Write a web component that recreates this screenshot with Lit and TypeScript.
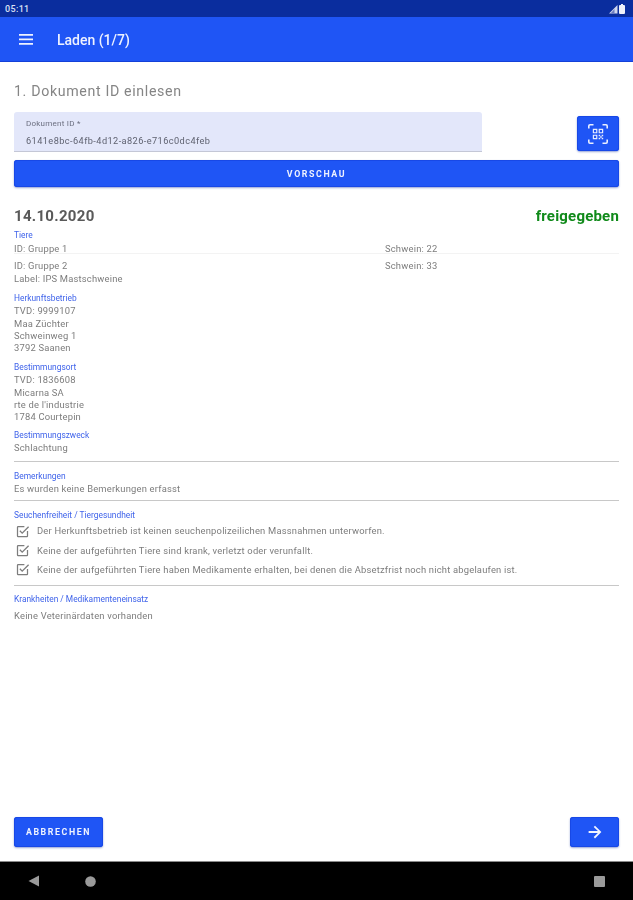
import { LitElement, html, css, svg } from "lit";
import { customElement } from "lit/decorators.js";

const check = svg`<path d="M7 11.500l1.500-1.500 3 3L21 3.500 22.500 5l-11 11z" fill="#7d7d7d"/><path d="M19 19H5V5h10V3H5a2 2 0 0 0-2 2v14a2 2 0 0 0 2 2h14a2 2 0 0 0 2-2v-8h-2z" fill="#7d7d7d"/>`;

@customElement("app-root")
export class AppRoot extends LitElement {
  static styles = css`
    :host { display: block; width: 633px; height: 900px; font-family: Roboto, "Liberation Sans", sans-serif; color: #6f6f6f; background: #fff; }
    .page { display: flex; flex-direction: column; height: 900px; filter: blur(0.45px); }
    .status { height: 17px; flex: none; background: #0a2d9e; color: #d9e0f5; display: flex; align-items: center; justify-content: space-between; padding: 0 8px 0 5px; font-size: 9px; font-weight: 500; letter-spacing: .35px; }
    .status-icons { display: flex; align-items: center; gap: 1px; }
    .bar { height: 45px; flex: none; background: #1f55f5; box-shadow: inset 0 -1px 0 #1440d8; display: flex; align-items: center; color: #fff; }
    .menu { margin-left: 19px; width: 14px; height: 11px; margin-top: -1px; }
    .bar-title { margin-left: 24px; font-size: 14px; font-weight: 500; color: #eef2ff; }
    .main { flex: 1; padding: 0 14px; display: flex; flex-direction: column; min-height: 0; }
    .step { margin-top: 21px; height: 17px; line-height: 17px; font-size: 14.2px; color: #858585; letter-spacing: .65px; }
    .input-row { margin-top: 12px; display: flex; justify-content: space-between; align-items: flex-start; }
    .field { width: 468px; height: 40px; box-sizing: border-box; background: #e3e7fa; border-radius: 3px 3px 0 0; border-bottom: 1px solid #c4c7d6; padding: 7px 12px 0; }
    .field-label { font-size: 8px; line-height: 9px; color: #6c6f80; letter-spacing: .25px; }
    .field-value { margin-top: 7px; font-size: 9.2px; line-height: 12px; color: #5f6270; letter-spacing: .42px; white-space: nowrap; }
    .btn { background: #1f55f5; color: #eef2ff; border-radius: 3px; display: flex; align-items: center; justify-content: center; box-shadow: 0 1px 2px rgba(20,50,160,.45), inset 0 0 0 1px #1848e6; font-weight: 700; font-size: 8.8px; letter-spacing: 1.6px; }
    .scan { width: 42px; height: 35px; margin-top: 4px; }
    .preview { height: 27px; margin-top: 8px; }
    .head { margin-top: 20px; height: 18px; display: flex; justify-content: space-between; align-items: center; }
    .date { font-size: 15px; font-weight: 700; color: #595959; letter-spacing: .3px; }
    .state { font-size: 15px; font-weight: 700; color: #108a1a; letter-spacing: .2px; }
    .label { font-size: 8.4px; line-height: 11px; height: 11px; color: #3f63ea; white-space: nowrap; }
    .txt { font-size: 9.4px; line-height: 12px; color: #7c7c7c; white-space: nowrap; letter-spacing: .2px; }
    .s-tiere { margin-top: 5px; }
    .row { display: grid; grid-template-columns: 371px 1fr; }
    .row.first { margin-top: 2px; height: 10px; border-bottom: 1px solid #f3f3f3; }
    .row.second { margin-top: 6px; }
    .line2 { display: block; margin-top: 1px; }
    .sec1 { margin-top: 8px; }
    .tvd1 { margin-top: 1px; }
    .addr { margin-top: 1px; }
    .sec2 { margin-top: 7.800px; }
    .tvd2 { margin-top: 1px; }
    .sec3 { margin-top: 7.300px; }
    .purpose { margin-top: 1px; }
    hr { border: 0; height: 1px; background: #c8c8c8; margin: 0; flex: none; }
    .hr1 { margin-top: 7px; }
    .sec4 { margin-top: 8.500px; }
    .note { margin-top: 1px; }
    .hr2 { margin-top: 5.500px; }
    .sec5 { margin-top: 8.500px; }
    .checks { margin-top: 1px; }
    .chk { display: flex; align-items: center; height: 19.300px; padding-left: 1px; }
    .chk svg { width: 15px; height: 15px; flex: none; }
    .chk span { margin-left: 7px; }
    .hr3 { margin-top: 5.600px; }
    .sec6 { margin-top: 8px; }
    .none { margin-top: 5.200px; }
    .actions { margin-top: auto; margin-bottom: 14px; display: flex; justify-content: space-between; align-items: center; }
    .cancel { width: 89px; height: 30px; }
    .next { width: 49px; height: 30px; }
    .nav { height: 39px; flex: none; background: #000; border-top: 1px solid #8a8a8a; box-sizing: border-box; position: relative; }
    .nav svg { position: absolute; left: 0; top: 0; }
  `;

  render() {
    return html`<div class="page">
      <div class="status">
        <span>05:11</span>
        <span class="status-icons">
          <svg width="10" height="10" viewBox="0 0 10 10"><path d="M9.500 1v8.500H1z" fill="#cfd6ee"/><path d="M6.500 5v4.500H2.500z" fill="#6a7cc0"/></svg>
          <svg width="6" height="10" viewBox="0 0 6 10"><path d="M2 0h2v1h1a1 1 0 0 1 1 1v7a1 1 0 0 1-1 1H1a1 1 0 0 1-1-1V2a1 1 0 0 1 1-1h1z" fill="#eef1fb"/></svg>
        </span>
      </div>
      <div class="bar">
        <svg class="menu" viewBox="0 0 14 11"><path d="M0 0h14v1.800H0zM0 4.500h14v1.800H0zM0 9h14v1.800H0z" fill="#eef2ff"/></svg>
        <span class="bar-title">Laden (1/7)</span>
      </div>
      <div class="main">
        <div class="step">1. Dokument ID einlesen</div>
        <div class="input-row">
          <div class="field">
            <div class="field-label">Dokument ID *</div>
            <div class="field-value">6141e8bc-64fb-4d12-a826-e716c0dc4feb</div>
          </div>
          <div class="btn scan">
            <svg width="24" height="24" viewBox="0 0 24 24" fill="#e9eeff"><path d="M4 4h7v7H4zm1.800 1.800v3.400h3.400V5.800zM13 4h7v7h-7zm1.800 1.800v3.400h3.400V5.800zM4 13h7v7H4zm1.800 1.800v3.400h3.400v-3.400zM13 13h2.400v2.400H13zm2.400 2.400h2.300v2.300h-2.300zm2.300-2.400H20v2.400h-2.300zM13 17.700h2.400V20H13zm4.700 0H20V20h-2.300z" transform="translate(4.200 4.200) scale(.65)"/><path d="M2 6.500V4a2 2 0 0 1 2-2h3.500v1.600H4a.4.4 0 0 0-.4.4v2.500zM16.500 2H20a2 2 0 0 1 2 2v2.500h-1.600V4a.4.4 0 0 0-.4-.4h-3.500zM2 17.500h1.600V20c0 .2.200.4.400.4h3.500V22H4a2 2 0 0 1-2-2zM20.400 17.500H22V20a2 2 0 0 1-2 2h-3.500v-1.600H20c.2 0 .4-.2.400-.4z"/></svg>
          </div>
        </div>
        <div class="btn preview">VORSCHAU</div>
        <div class="head"><span class="date">14.10.2020</span><span class="state">freigegeben</span></div>

        <div class="label s-tiere">Tiere</div>
        <div class="row first txt"><span>ID: Gruppe 1</span><span>Schwein: 22</span></div>
        <div class="row second txt"><span>ID: Gruppe 2<span class="line2">Label: IPS Mastschweine</span></span><span>Schwein: 33</span></div>

        <div class="label sec1">Herkunftsbetrieb</div>
        <div class="txt tvd1">TVD: 9999107</div>
        <div class="txt addr">Maa Züchter<br />Schweinweg 1<br />3792 Saanen</div>

        <div class="label sec2">Bestimmungsort</div>
        <div class="txt tvd2">TVD: 1836608</div>
        <div class="txt addr">Micarna SA<br />rte de l'industrie<br />1784 Courtepin</div>

        <div class="label sec3">Bestimmungszweck</div>
        <div class="txt purpose">Schlachtung</div>
        <hr class="hr1" />

        <div class="label sec4">Bemerkungen</div>
        <div class="txt note">Es wurden keine Bemerkungen erfasst</div>
        <hr class="hr2" />

        <div class="label sec5">Seuchenfreiheit / Tiergesundheit</div>
        <div class="checks">
          <div class="chk txt"><svg viewBox="0 0 24 24">${check}</svg><span>Der Herkunftsbetrieb ist keinen seuchenpolizeilichen Massnahmen unterworfen.</span></div>
          <div class="chk txt"><svg viewBox="0 0 24 24">${check}</svg><span>Keine der aufgeführten Tiere sind krank, verletzt oder verunfallt.</span></div>
          <div class="chk txt"><svg viewBox="0 0 24 24">${check}</svg><span>Keine der aufgeführten Tiere haben Medikamente erhalten, bei denen die Absetzfrist noch nicht abgelaufen ist.</span></div>
        </div>
        <hr class="hr3" />

        <div class="label sec6">Krankheiten / Medikamenteneinsatz</div>
        <div class="txt none">Keine Veterinärdaten vorhanden</div>

        <div class="actions">
          <div class="btn cancel">ABBRECHEN</div>
          <div class="btn next">
            <svg width="18" height="18" viewBox="0 0 24 24"><path d="M12 3.500l-1.700 1.700 5.600 5.600H3.500v2.400h12.400l-5.600 5.600 1.700 1.700 8.500-8.500z" fill="#f2f5ff"/></svg>
          </div>
        </div>
      </div>
      <div class="nav">
        <svg width="633" height="38" viewBox="0 0 633 38">
          <path d="M39 13.500v11L28.500 19z" fill="#9a9a9a"/>
          <circle cx="90.500" cy="19.500" r="5.300" fill="#9a9a9a"/>
          <rect x="594" y="14" width="11" height="11" rx="1" fill="#9a9a9a"/>
        </svg>
      </div>
    </div>`;
  }
}
